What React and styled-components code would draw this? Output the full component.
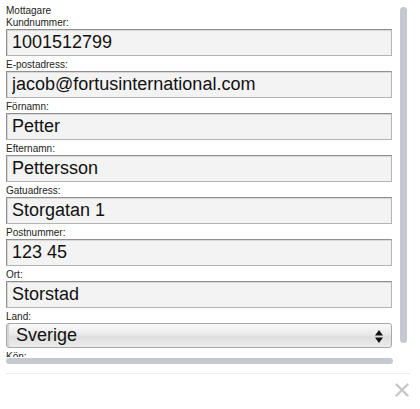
import React from 'react';
import styled, { createGlobalStyle } from 'styled-components';

const GlobalStyle = createGlobalStyle`
  html, body {
    margin: 0;
    padding: 0;
    background: #fff;
    font-family: "Liberation Sans", Arial, sans-serif;
  }
`;

const Sheet = styled.div`
  width: 420px;
  height: 409px;
  overflow: hidden;
  display: flex;
  flex-direction: column;
`;

const Viewport = styled.div`
  position: relative;
  height: 366px;
  flex-shrink: 0;
`;

const Clip = styled.div`
  height: 357px;
  overflow: hidden;
  padding-left: 6px;
`;

const Form = styled.div`
  width: 386px;
  padding-top: 4px;
  display: flex;
  flex-direction: column;
`;

const Heading = styled.div`
  font-size: 10px;
  line-height: 13px;
  color: #222;
`;

const Label = styled.label`
  display: block;
  font-size: 10px;
  line-height: 12px;
  color: #222;
  margin-top: ${(p) => (p.$first ? '0' : '3px')};
`;

const Input = styled.input`
  box-sizing: border-box;
  width: 386px;
  height: 27px;
  margin: 0;
  padding: 0 5px;
  font-family: "Liberation Sans", Arial, sans-serif;
  font-size: 18px;
  color: #111;
  background: #f3f3f3;
  border: 1px solid #b4b4b4;
  border-top-color: #8f8f8f;
  border-left-color: #8f8f8f;
  box-shadow: inset 1px 1px 0 #d8d8d8;
  border-radius: 0;
  outline: none;
`;

const SelectBox = styled.div`
  position: relative;
  box-sizing: border-box;
  width: 386px;
  height: 25px;
  border: 1px solid #a8a8a8;
  border-radius: 3px;
  background: linear-gradient(#fbfbfb, #e9e9e9 45%, #dedede 55%, #ececec);
  box-shadow: inset 2px 0 0 #d4d4d4;
  display: flex;
  align-items: center;
  padding-left: 9px;
  font-size: 18px;
  color: #111;
`;

const Arrows = styled.svg`
  position: absolute;
  right: 8px;
  top: 6px;
`;

const Thumb = styled.div`
  position: absolute;
  background: #c5c9cf;
  border-radius: 4px;
`;

const Divider = styled.div`
  height: 1px;
  background: #ebebeb;
  margin: 7px 10px 0 6px;
`;

const Footer = styled.div`
  display: flex;
  justify-content: flex-end;
  padding: 9px 11px 0 0;
`;

const CloseIcon = styled.svg`
  display: block;
`;

const fields = [
  ['E-postadress:', 'jacob@fortusinternational.com'],
  ['Förnamn:', 'Petter'],
  ['Efternamn:', 'Pettersson'],
  ['Gatuadress:', 'Storgatan 1'],
  ['Postnummer:', '123 45'],
  ['Ort:', 'Storstad'],
];

export default function App() {
  return (
    <Sheet>
      <GlobalStyle />
      <Viewport>
        <Clip>
          <Form>
            <Heading>Mottagare</Heading>
            <Label $first>Kundnummer:</Label>
            <Input defaultValue="1001512799" />
            {fields.map(([label, value]) => (
              <React.Fragment key={label}>
                <Label>{label}</Label>
                <Input defaultValue={value} />
              </React.Fragment>
            ))}
            <Label>Land:</Label>
            <SelectBox>
              Sverige
              <Arrows width="8" height="13" viewBox="0 0 8 13">
                <path d="M4 0 L8 5.5 L0 5.5 Z" fill="#111" />
                <path d="M0 7.5 L8 7.5 L4 13 Z" fill="#111" />
              </Arrows>
            </SelectBox>
            <Label>Kön:</Label>
            <Input defaultValue="Man" />
          </Form>
        </Clip>
        <Thumb style={{ left: 400, top: 7, width: 7, height: 336 }} />
        <Thumb style={{ left: 6, top: 358, width: 387, height: 6 }} />
      </Viewport>
      <Divider />
      <Footer>
        <CloseIcon width="14" height="14" viewBox="0 0 14 14">
          <path d="M1.5 1.5 L12.5 12.5 M12.5 1.5 L1.5 12.5" stroke="#c8c8c8" strokeWidth="2.4" strokeLinecap="round" />
        </CloseIcon>
      </Footer>
    </Sheet>
  );
}
